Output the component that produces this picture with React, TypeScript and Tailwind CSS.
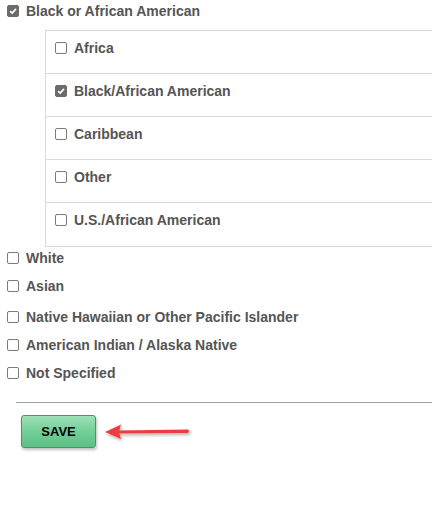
import React from "react";

const Box = ({ checked = false }: { checked?: boolean }) => (
  <span
    className={
      "inline-flex h-[12px] w-[12px] shrink-0 items-center justify-center rounded-[2px] border " +
      (checked ? "border-[#6b6b6b] bg-[#6b6b6b]" : "border-[#7a7a7a] bg-white")
    }
  >
    {checked && (
      <svg viewBox="0 0 12 12" className="h-[10px] w-[10px]">
        <path d="M2.5 6.2 L5 8.6 L9.6 3.4" fill="none" stroke="white" strokeWidth="2" />
      </svg>
    )}
  </span>
);

const Item = ({ label, checked }: { label: string; checked?: boolean }) => (
  <div className="flex items-center gap-[7px]">
    <Box checked={checked} />
    <span>{label}</span>
  </div>
);

const subs = [
  { label: "Africa" },
  { label: "Black/African American", checked: true },
  { label: "Caribbean" },
  { label: "Other" },
  { label: "U.S./African American" },
];

export default function App() {
  return (
    <div className="h-[506px] w-[432px] overflow-hidden bg-white font-['Liberation_Sans',Arial,sans-serif] text-[14px] font-bold leading-[16px] text-[#555]">
      <div className="pl-[7px] pt-[3px]">
        <Item label="Black or African American" checked />
      </div>

      <div className="ml-[45px] mt-[11px] border-y border-l border-[#dadada]">
        {subs.map((s, i) => (
          <div
            key={s.label}
            className={
              "h-[43px] pl-[9px] pt-[9px] " + (i < subs.length - 1 ? "border-b border-[#dadada]" : "")
            }
          >
            <Item label={s.label} checked={s.checked} />
          </div>
        ))}
      </div>

      <div className="flex flex-col pl-[7px] pt-[3px]">
        <div className="h-[28px]">
          <Item label="White" />
        </div>
        <div className="h-[31px]">
          <Item label="Asian" />
        </div>
        <div className="h-[28px]">
          <Item label="Native Hawaiian or Other Pacific Islander" />
        </div>
        <div className="h-[28px]">
          <Item label="American Indian / Alaska Native" />
        </div>
        <div className="h-[28px]">
          <Item label="Not Specified" />
        </div>
      </div>

      <div className="ml-[16px] mt-[9px] border-t border-[#a0a0a0]" />

      <div className="flex items-center pl-[21px] pt-[12px]">
        <button className="h-[33px] w-[75px] rounded-[3px] border border-[#3f9a64] bg-gradient-to-b from-[#9ee0b8] via-[#72cf97] to-[#5cbf84] text-[13px] font-bold text-black shadow-[1px_2px_3px_rgba(0,0,0,0.25)]">
          SAVE
        </button>
        <svg width="96" height="22" viewBox="0 0 96 22" className="ml-[6px]">
          <defs>
            <filter id="sh" x="-10%" y="-50%" width="120%" height="200%">
              <feDropShadow dx="1" dy="2" stdDeviation="1.5" floodColor="#000" floodOpacity="0.3" />
            </filter>
          </defs>
          <g filter="url(#sh)">
            <path d="M16 9.5 L86 8.5 Q88 10 86 12 L16 12.5 Z" fill="#ee3e3e" />
            <path d="M3 11 L19 3.5 L17 11 L19 18 Z" fill="#ee3e3e" />
          </g>
        </svg>
      </div>
    </div>
  );
}
